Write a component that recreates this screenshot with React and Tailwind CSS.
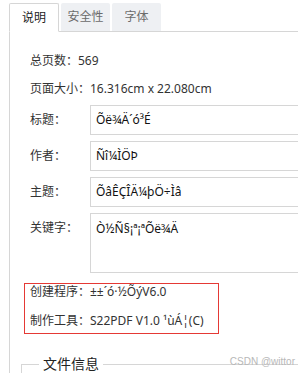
import React from 'react';

const fields = [
    { label: '标题：', value: 'Õë¾Ä´ó³É' },
    { label: '作者：', value: 'Ñî¼ÌÖÞ' },
    { label: '主题：', value: 'ÕâÊÇÎÄ¼þÖ÷Ìâ' },
];

const Tab = ({ children, active }) => (
    <div
        className={
            active
                ? 'w-[50px] h-[29px] flex items-center justify-center border border-[#d6d6d6] border-b-white bg-white text-[#222] rounded-t-[2px]'
                : 'w-[49px] h-[28px] flex items-center justify-center bg-[#eef0f3] text-[#6b6b6b] rounded-t-[2px]'
        }
    >
        {children}
    </div>
);

const DocProperties = () => {
    return (
        <div className="w-[298px] h-[373px] overflow-hidden bg-white relative font-['Noto_Sans','Noto_Sans_CJK_SC',sans-serif] text-[12px] text-[#333]">
            <div className="pl-[9px] pt-[3px] w-[400px]">
                <div className="flex items-start gap-[2px] relative z-10 -mb-px">
                    <Tab active>说明</Tab>
                    <Tab>安全性</Tab>
                    <Tab>字体</Tab>
                </div>

                <div className="border-l border-t border-[#d6d6d6] pl-[20px] pt-[20px] h-[400px]">
                    <div className="leading-[18px]">总页数：569</div>
                    <div className="leading-[18px] mt-[10px]">页面大小：16.316cm x 22.080cm</div>

                    <div className="flex flex-col gap-[6px] mt-[7px]">
                        {fields.map((f) => (
                            <div key={f.label} className="flex">
                                <div className="w-[60px] shrink-0 h-[30px] flex items-center">{f.label}</div>
                                <div className="w-[280px] shrink-0 h-[30px] border border-[#d6d6d6] flex items-center px-[5px] text-[#111]">
                                    {f.value}
                                </div>
                            </div>
                        ))}
                        <div className="flex">
                            <div className="w-[60px] shrink-0 h-[30px] flex items-center">关键字：</div>
                            <div className="w-[280px] shrink-0 h-[60px] border border-[#d6d6d6] px-[5px] pt-[6px] leading-[18px] text-[#111]">
                                Ò½Ñ§¡ª¡ªÕë¾Ä
                            </div>
                        </div>
                    </div>

                    <div className="-ml-[6px] mt-[10px] w-[195px] border border-[#e53935] pl-[5px] pb-[4px] flex flex-col gap-[13px] leading-[16px]">
                        <div>创建程序：±±´ó·½ÕýV6.0</div>
                        <div>制作工具：S22PDF V1.0 ¹ùÁ¦(C)</div>
                    </div>

                    <fieldset className="-ml-[9px] mt-[20px] w-[340px] h-[60px] border border-[#d6d6d6]">
                        <legend className="ml-[17px] px-[4px] text-[14px] leading-[20px] text-[#222]">文件信息</legend>
                    </fieldset>
                </div>
            </div>

            <div className="absolute right-[3px] top-[355px] text-[10px] leading-[14px] text-[#b8b8b8] font-['Liberation_Sans',sans-serif]">
                CSDN @wittor
            </div>
        </div>
    );
};

export default DocProperties;
